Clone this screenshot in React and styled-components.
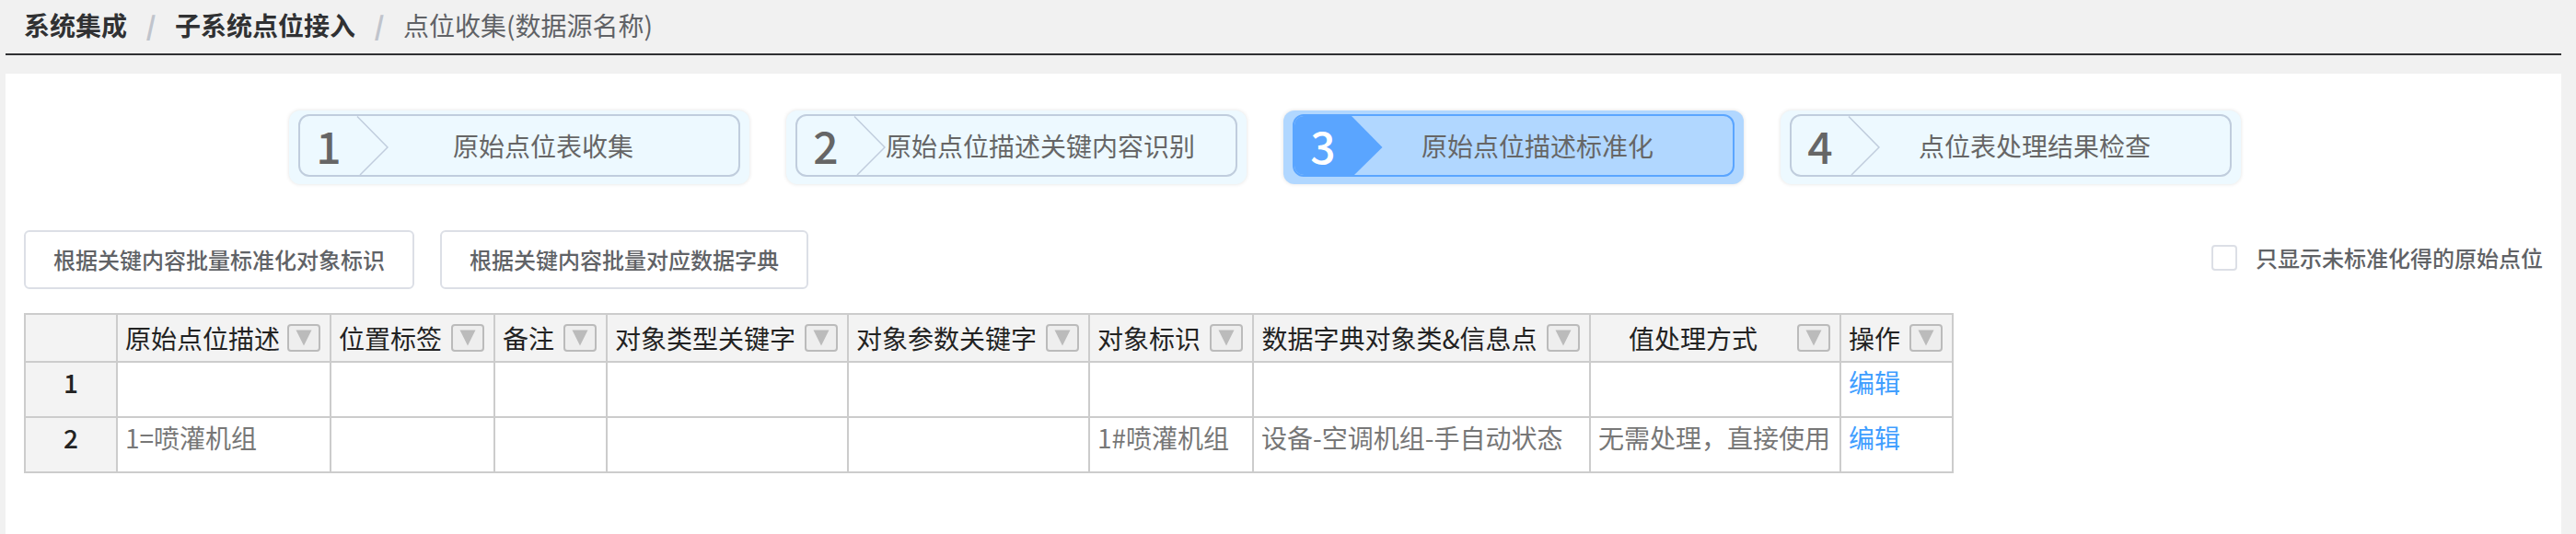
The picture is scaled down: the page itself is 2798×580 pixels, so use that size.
import React from "react";
import styled, { createGlobalStyle, css } from "styled-components";

const GlobalStyle = createGlobalStyle`
  *, *::before, *::after { box-sizing: border-box; }
  body {
    margin: 0;
    background: #f1f1f1;
    color: #606266;
    font-family: "Noto Sans CJK SC", sans-serif;
    font-size: 28px;
  }
  button, input { font-family: inherit; }
`;

const Page = styled.div`
  min-height: 100vh;
  display: flex;
  flex-direction: column;
  gap: 20px;
  padding: 0 16px 0 6px;
`;

const Breadcrumb = styled.nav`
  border-bottom: 2px solid #303133;
  padding: 7px 20px 11px;
`;

const Crumbs = styled.ol`
  display: flex;
  margin: 0;
  padding: 0;
  list-style: none;
  line-height: 40px;
`;

const Crumb = styled.li`
  display: flex;

  & + &::before {
    content: "/";
    width: 16px;
    margin: 0 18px;
    text-align: center;
    font-weight: 900;
    color: #c0c4cc;
  }
`;

const CrumbLink = styled.a`
  color: #303133;
  font-weight: 700;
  text-decoration: none;
`;

const Panel = styled.main`
  flex: 1;
  background: #fff;
  padding: 40px 20px;
`;

const Steps = styled.ol`
  display: flex;
  justify-content: center;
  margin: 0 0 50px;
  padding: 0;
  list-style: none;
`;

const Step = styled.li`
  width: 500px;
  margin-right: 40px;
  padding: 4px 10px 8px;
  border-radius: 12px;
  background: ${(p) => (p.$active ? "#b1d7ff" : "#edf9ff")};
  box-shadow: 0 0 4px rgba(0, 0, 0, 0.12);
`;

const StepButton = styled.button`
  display: flex;
  align-items: center;
  width: 100%;
  height: 68px;
  padding: 0;
  border: 2px solid ${(p) => (p.$active ? "#5aa5ff" : "#c0cddd")};
  border-radius: 12px;
  background: none;
  color: #666;
  font-size: 28px;
  line-height: 40px;
`;

const StepMarker = styled.span`
  display: grid;
  width: 96px;
  height: 64px;
  flex: none;

  & > * { grid-area: 1 / 1; }
`;

const StepNumber = styled.span`
  width: 62px;
  text-align: center;
  font-size: 48px;
  font-weight: 500;
  line-height: 62px;
  ${(p) => p.$active && css`color: #fff;`}
`;

const StepLabel = styled.span`
  flex: 1;
  padding-right: 44px;
  text-align: center;
  white-space: nowrap;
`;

const Toolbar = styled.div`
  display: flex;
  align-items: center;
  gap: 28px;
  margin-bottom: 26px;
`;

const ActionButton = styled.button`
  height: 64px;
  padding: 0 30px;
  border: 2px solid #dcdfe6;
  border-radius: 6px;
  background: #fff;
  color: #606266;
  font-size: 24px;
  font-weight: 500;
  line-height: 36px;
`;

const CheckLabel = styled.label`
  display: flex;
  align-items: center;
  gap: 20px;
  height: 60px;
  margin: 0 0 4px auto;
  font-size: 24px;
  font-weight: 500;
  line-height: 36px;
`;

const Checkbox = styled.input`
  appearance: none;
  width: 28px;
  height: 28px;
  margin: 0;
  border: 2px solid #dcdfe6;
  border-radius: 4px;
  background: #fff;
  &:checked { background: #409eff; }
`;

const Grid = styled.table`
  width: 2096px;
  table-layout: fixed;
  border-collapse: collapse;
  line-height: 42px;
  white-space: nowrap;
`;

const HeadCell = styled.th`
  height: 52px;
  padding: 0 10px 0 8px;
  border: 2px solid #ccc;
  background: #f3f3f3;
  color: #222;
  font-weight: 400;
`;

const HeadContent = styled.div`
  display: flex;
  align-items: center;
  gap: 10px;
`;

const HeadText = styled.span`
  flex: 1;
  min-width: 0;
  text-align: center;
`;

const FilterButton = styled.button`
  display: flex;
  justify-content: center;
  align-items: center;
  flex: none;
  width: 36px;
  height: 30px;
  padding: 0;
  border: 2px solid #bbb;
  border-radius: 4px;
  background: #eee;
`;

const RowHead = styled.th`
  height: 60px;
  padding: 0;
  border: 2px solid #ccc;
  background: #f3f3f3;
  color: #222;
  font-weight: 500;
  vertical-align: top;
`;

const Cell = styled.td`
  padding: 0 8px;
  border: 2px solid #ccc;
  background: #fff;
  color: #777;
  vertical-align: top;
`;

const EditLink = styled.a`
  color: #409eff;
  text-decoration: none;
`;

const steps = ["原始点位表收集", "原始点位描述关键内容识别", "原始点位描述标准化", "点位表处理结果检查"];
const activeStep = 2;

const columns = [
  { title: "原始点位描述", width: 232 },
  { title: "位置标签", width: 178 },
  { title: "备注", width: 122 },
  { title: "对象类型关键字", width: 262 },
  { title: "对象参数关键字", width: 262 },
  { title: "对象标识", width: 178 },
  { title: "数据字典对象类&信息点", width: 366 },
  { title: "值处理方式", width: 272 },
  { title: "操作", width: 122 },
];

const rows = [
  ["", "", "", "", "", "", "", ""],
  ["1=喷灌机组", "", "", "", "", "1#喷灌机组", "设备-空调机组-手自动状态", "无需处理，直接使用"],
];

function StepArrow({ active }) {
  return (
    <svg width="96" height="64" viewBox="0 0 96 64" aria-hidden="true">
      {active ? (
        <path d="M10 0H62L95.500 34L65 64H10A10 10 0 0 1 0 54V10A10 10 0 0 1 10 0Z" fill="#5aa5ff" />
      ) : (
        <path d="M62 0.500L95 34L65 64" fill="none" stroke="#c0cddd" strokeWidth="1.500" />
      )}
    </svg>
  );
}

export default function App() {
  return (
    <>
      <GlobalStyle />
      <Page>
        <Breadcrumb>
          <Crumbs>
            <Crumb><CrumbLink href="#integration">系统集成</CrumbLink></Crumb>
            <Crumb><CrumbLink href="#access">子系统点位接入</CrumbLink></Crumb>
            <Crumb aria-current="page">点位收集(数据源名称)</Crumb>
          </Crumbs>
        </Breadcrumb>
        <Panel>
          <Steps>
            {steps.map((label, i) => {
              const active = i === activeStep;
              return (
                <Step key={label} $active={active}>
                  <StepButton type="button" $active={active}>
                    <StepMarker>
                      <StepArrow active={active} />
                      <StepNumber $active={active}>{i + 1}</StepNumber>
                    </StepMarker>
                    <StepLabel>{label}</StepLabel>
                  </StepButton>
                </Step>
              );
            })}
          </Steps>
          <Toolbar>
            <ActionButton type="button">根据关键内容批量标准化对象标识</ActionButton>
            <ActionButton type="button">根据关键内容批量对应数据字典</ActionButton>
            <CheckLabel>
              <Checkbox type="checkbox" />
              只显示未标准化得的原始点位
            </CheckLabel>
          </Toolbar>
          <Grid>
            <colgroup>
              <col width="100" />
              {columns.map((c) => <col key={c.title} width={c.width} />)}
            </colgroup>
            <thead>
              <tr>
                <HeadCell />
                {columns.map((c) => (
                  <HeadCell key={c.title} scope="col">
                    <HeadContent>
                      <HeadText>{c.title}</HeadText>
                      <FilterButton type="button" aria-label="筛选">
                        <svg width="18" height="18" viewBox="0 0 18 18" aria-hidden="true">
                          <path d="M0.500 0.500H17.500L9 17.500Z" fill="#bbb" />
                        </svg>
                      </FilterButton>
                    </HeadContent>
                  </HeadCell>
                ))}
              </tr>
            </thead>
            <tbody>
              {rows.map((cells, i) => (
                <tr key={i}>
                  <RowHead scope="row">{i + 1}</RowHead>
                  {cells.map((text, j) => <Cell key={j}>{text}</Cell>)}
                  <Cell><EditLink href="#edit">编辑</EditLink></Cell>
                </tr>
              ))}
            </tbody>
          </Grid>
        </Panel>
      </Page>
    </>
  );
}
